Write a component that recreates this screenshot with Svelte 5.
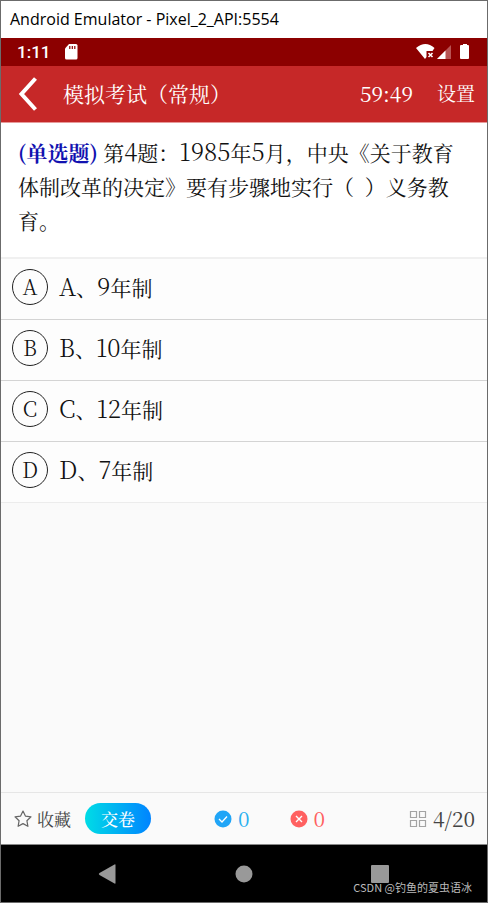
<script lang="ts">
	type Option = { key: string; amount: string; unit: string };

	const options: Option[] = [
		{ key: 'A', amount: '9', unit: '年制' },
		{ key: 'B', amount: '10', unit: '年制' },
		{ key: 'C', amount: '12', unit: '年制' },
		{ key: 'D', amount: '7', unit: '年制' }
	];

	let answer = $state('');
	let right = $state(0);
	let wrong = $state(0);
</script>

<div class="window">
	<div class="titlebar">Android Emulator - Pixel_2_API:5554</div>

	<div class="status">
		<span>1:11</span>
		<svg class="sd" width="14" height="16" viewBox="0 0 14 16" aria-hidden="true">
			<path
				d="M5 0h7q1.500 0 1.500 1.500v12.500q0 1.500-1.500 1.500H2.500Q1 15.500 1 14V4.500z"
				fill="#fff"
			/>
			<path d="M5.800 2v3M8.300 2v3M10.800 2v3" stroke="#8c0000" stroke-width="1.200" />
		</svg>
		<svg class="signals" width="56" height="18" viewBox="0 0 56 18" aria-hidden="true">
			<path d="M1 5q9.500-8 18.500 0l-2 3h-6v6l-1.500 2z" fill="#fff" />
			<path d="m13.500 10 4 4m0-4-4 4" stroke="#fff" stroke-width="1.600" />
			<path d="M36 2v14H22z" fill="#b85454" />
			<path d="M30.500 7.500V16H22z" fill="#fff" />
			<path d="M46 2h2V1h4v1h1q1 0 1 1v12q0 1-1 1h-7q-1 0-1-1V3q0-1 1-1z" fill="#fff" />
		</svg>
	</div>

	<header>
		<button class="back" aria-label="返回">
			<svg width="20" height="34" viewBox="0 0 20 34" aria-hidden="true">
				<path d="M18.500 1.500 4.500 17l14 15.500" fill="none" stroke="#fff" stroke-width="4" />
			</svg>
		</button>
		<h1>模拟考试（常规）</h1>
		<time>59:49</time>
		<button class="settings">设置</button>
	</header>

	<main>
		<p class="question" id="question">
			<strong>(单选题)</strong> 第<span class="num">4</span>题：<span class="num">1985</span>年<span
				class="num">5</span
			>月，中央《关于教育体制改革的决定》要有步骤地实行（&nbsp;&nbsp;）义务教育。
		</p>

		<div class="options" role="radiogroup" aria-labelledby="question">
			{#each options as o (o.key)}
				<label class="option">
					<span class="mark">
						<input type="radio" name="answer" value={o.key} bind:group={answer} />
						<span>{o.key}</span>
					</span>
					<span class="text">
						<span class="num">{o.key}</span>、<span class="num">{o.amount}</span>{o.unit}
					</span>
				</label>
			{/each}
		</div>
	</main>

	<footer>
		<button class="tool fav">
			<svg width="18" height="18" viewBox="0 0 18 18" aria-hidden="true">
				<path
					d="m9 1 2.400 5.100 5.600.7-4.100 3.900 1 5.600L9 13.600l-4.900 2.700 1-5.600L1 6.800l5.600-.7z"
					fill="none"
					stroke="#666"
					stroke-width="1.200"
					stroke-linejoin="round"
				/>
			</svg>
			收藏
		</button>
		<button class="submit">交卷</button>
		<span class="tool right">
			<svg width="18" height="18" viewBox="0 0 18 18" aria-hidden="true">
				<circle cx="9" cy="9" r="8.500" fill="#20a5f7" />
				<path d="m5 9 3 3 5-5.500" fill="none" stroke="#fff" stroke-width="1.300" />
			</svg>
			<span>{right}</span>
		</span>
		<span class="tool wrong">
			<svg width="18" height="18" viewBox="0 0 18 18" aria-hidden="true">
				<circle cx="9" cy="9" r="8.500" fill="#ff6060" />
				<path d="m6 6 6 6m0-6-6 6" stroke="#fff" stroke-width="1.400" />
			</svg>
			<span>{wrong}</span>
		</span>
		<button class="tool sheet">
			<svg width="18" height="18" viewBox="0 0 18 18" aria-hidden="true">
				<path
					d="M1.500 1.500h6v6h-6zM10.500 1.500h6v6h-6zM1.500 10.500h6v6h-6zM10.500 10.500h6v6h-6z"
					fill="none"
					stroke="#a3a3a3"
					stroke-width="1.200"
				/>
			</svg>
			<span>4/20</span>
		</button>
	</footer>

	<nav>
		<button aria-label="后退">
			<svg width="20" height="20" viewBox="0 0 20 20" aria-hidden="true">
				<path d="M1.500 9 16.500.5q1-.5 1 .5v18q0 1-1 .5L1.500 11q-1.500-1 0-2z" fill="#999" />
			</svg>
		</button>
		<button aria-label="主屏幕">
			<svg width="20" height="20" viewBox="0 0 20 20" aria-hidden="true">
				<circle cx="10" cy="10" r="8.500" fill="#999" />
			</svg>
		</button>
		<button aria-label="最近任务">
			<svg width="20" height="20" viewBox="0 0 20 20" aria-hidden="true">
				<rect x="1" y="1" width="18" height="18" rx="1" fill="#999" />
			</svg>
		</button>
		<span class="credit">CSDN @钓鱼的夏虫语冰</span>
	</nav>
</div>

<style>
	:global(body) {
		background: #fafafa;
	}
	.window {
		box-sizing: border-box;
		display: flex;
		flex-direction: column;
		min-height: 100vh;
		border: 1px solid #6b6b6b;
		background: #fafafa;
		color: #111;
		font-family: 'Noto Serif CJK SC', 'Liberation Serif', 'Noto Sans CJK SC', serif;
		font-size: 21px;
		line-height: 24px;
	}
	button {
		display: flex;
		align-items: center;
		margin: 0;
		padding: 0;
		border: 0;
		background: none;
		color: inherit;
		font: inherit;
		cursor: pointer;
	}
	svg {
		display: block;
		flex: none;
	}
	.num {
		font-size: 24px;
		font-weight: 300;
		line-height: 24px;
	}
	.titlebar {
		padding: 0 9px;
		background: #fff;
		color: #000;
		font: 16px/37px 'Open Sans', 'Noto Sans', sans-serif;
	}
	.status {
		display: flex;
		align-items: center;
		gap: 14px;
		height: 28px;
		padding: 0 16px;
		background: #8c0000;
		color: #fff;
		font: 500 17px/28px Roboto, sans-serif;
	}
	.signals {
		margin-left: auto;
	}
	header {
		display: flex;
		align-items: center;
		height: 56px;
		padding: 0 12px 0 16px;
		border-bottom: 1px solid #e79a9a;
		background: #c62828;
		color: #fff;
	}
	h1,
	time,
	.settings {
		padding-bottom: 2px;
	}
	h1 {
		flex: 1;
		margin: 0 0 0 26px;
		font-size: 21px;
		font-weight: 400;
	}
	.settings {
		margin-left: 24px;
		font-size: 19px;
	}
	.question {
		margin: 0;
		padding: 12px 18px 20px 17px;
		border-bottom: 2px solid #f0f0f0;
		background: #fff;
		line-height: 34px;
	}
	strong {
		color: #1212b0;
	}
	.option {
		display: flex;
		align-items: center;
		gap: 11px;
		height: 56px;
		padding: 0 11px 4px;
		border-bottom: 1px solid #d4d4d4;
		background: #fdfdfd;
		cursor: pointer;
	}
	.option:last-child {
		border-color: #ececec;
	}
	.text {
		padding-bottom: 2px;
	}
	.mark {
		display: grid;
		place-items: center;
		font-weight: 300;
	}
	.mark > * {
		grid-area: 1 / 1;
	}
	.mark span {
		padding-bottom: 2px;
	}
	input {
		width: 36px;
		height: 36px;
		margin: 0;
		border: 1px solid #222;
		border-radius: 50%;
		appearance: none;
	}
	input:checked {
		background: #d8ecff;
	}
	footer {
		display: flex;
		align-items: center;
		height: 51px;
		margin-top: auto;
		padding: 0 12px 0 13px;
		border-top: 1px solid #e6e6e6;
		border-bottom: 1px solid #888;
		color: #444;
	}
	.tool {
		display: flex;
		align-items: center;
		gap: 6px;
	}
	.tool span {
		padding-bottom: 2px;
	}
	.fav {
		gap: 5px;
		font-size: 17px;
	}
	.submit {
		height: 31px;
		margin-left: 14px;
		padding: 0 16px;
		border-radius: 16px;
		background: linear-gradient(90deg, #00dce6, #0084ff);
		color: #fff;
		font-size: 17px;
		font-weight: 500;
	}
	.right {
		margin-left: 63px;
		color: #2cb0f0;
	}
	.wrong {
		margin-left: 40px;
		color: #ff6060;
	}
	.sheet {
		margin-left: auto;
	}
	nav {
		position: relative;
		display: flex;
		align-items: center;
		justify-content: space-between;
		height: 57px;
		padding: 0 20%;
		background: #000;
	}
	.credit {
		position: absolute;
		right: 15px;
		bottom: 7px;
		color: #bbb;
		font: 11px/16px 'Noto Sans CJK SC', sans-serif;
	}
</style>
